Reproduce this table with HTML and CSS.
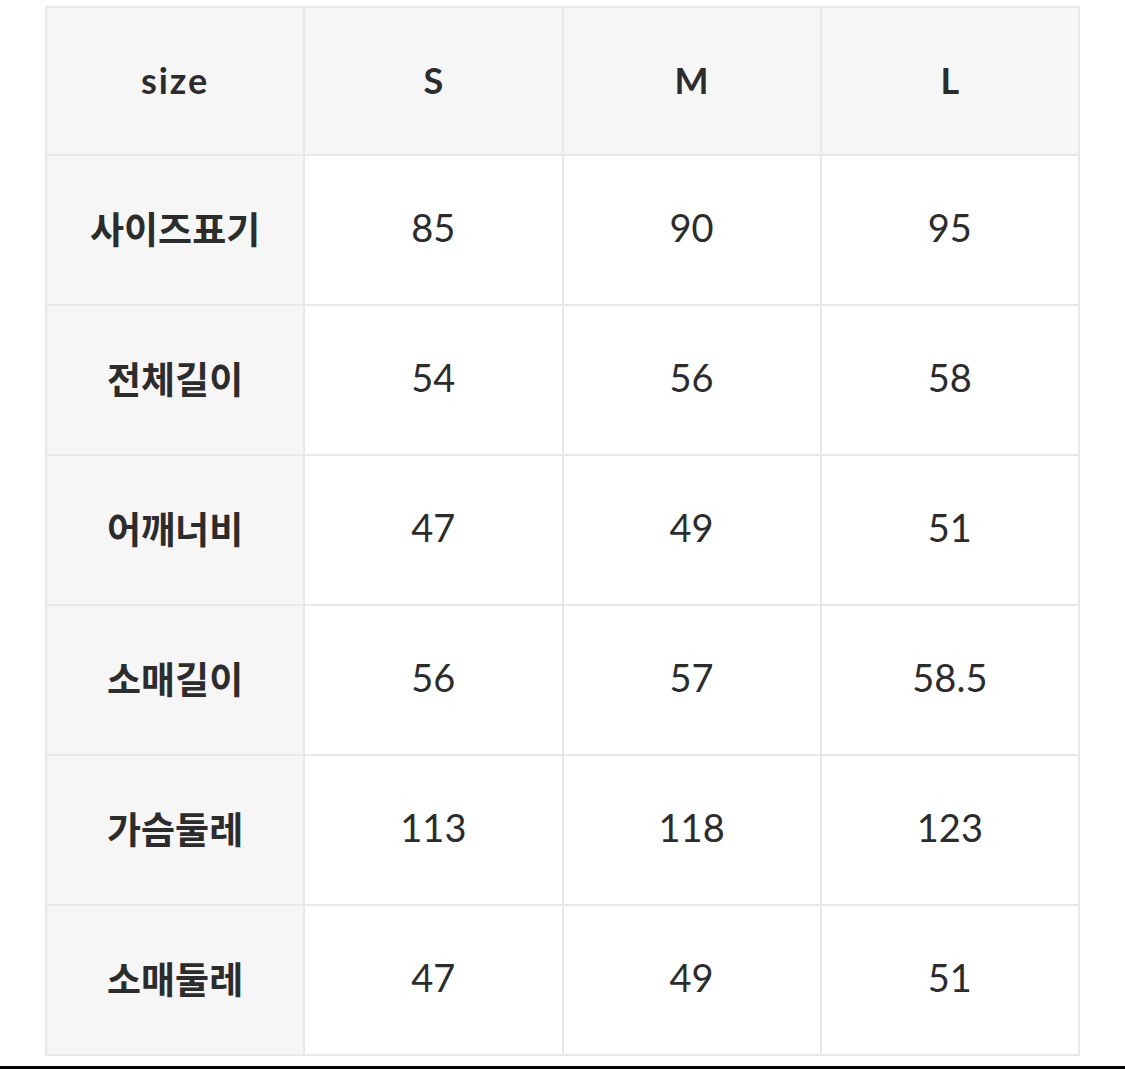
FILE: index.html
```html
<!DOCTYPE html>
<html lang="ko">
<head>
<meta charset="utf-8">
<title>size</title>
<link rel="stylesheet" href="styles.css">
</head>
<body>
<div class="page">
  <table class="size-table">
    <thead>
      <tr class="head-row"><th class="size-label">size</th><th>S</th><th>M</th><th>L</th></tr>
    </thead>
    <tbody>
      <tr><th class="label">사이즈표기</th><td>85</td><td>90</td><td>95</td></tr>
      <tr><th class="label">전체길이</th><td>54</td><td>56</td><td>58</td></tr>
      <tr><th class="label">어깨너비</th><td>47</td><td>49</td><td>51</td></tr>
      <tr><th class="label">소매길이</th><td>56</td><td>57</td><td>58.5</td></tr>
      <tr><th class="label">가슴둘레</th><td>113</td><td>118</td><td>123</td></tr>
      <tr><th class="label">소매둘레</th><td>47</td><td>49</td><td>51</td></tr>
    </tbody>
  </table>
</div>
<div class="rule"></div>
</body>
</html>
```
FILE: styles.css
```css
html, body {
  margin: 0;
  padding: 0;
  background: #ffffff;
}
.page {
  padding: 6px 0 0 45px;
  height: 1059px;
  box-sizing: border-box;
}
.size-table {
  width: 1035px;
  border-collapse: collapse;
  table-layout: fixed;
  font-family: Lato, "Noto Sans CJK KR", sans-serif;
  color: #2c2c2c;
}
.size-table tr {
  height: 150px;
}
.size-table tr.head-row {
  height: 148px;
}
.size-table th,
.size-table td {
  border: 2px solid #e8e8e8;
  text-align: center;
  vertical-align: middle;
  padding: 0 0 6px 0;
}
.size-table td {
  background: #ffffff;
  font-size: 38px;
  font-weight: 400;
}
.size-table th {
  background: #f6f6f6;
  font-size: 36px;
  font-weight: 700;
}
.size-table thead th {
  padding-bottom: 2px;
}
.size-table th.size-label {
  letter-spacing: 2px;
}
.size-table tbody th.label {
  font-family: "Noto Sans CJK KR", sans-serif;
  font-size: 37px;
  font-weight: 700;
  padding-bottom: 4px;
}
.rule {
  height: 3px;
  background: #000000;
  margin-top: 7px;
}
```
